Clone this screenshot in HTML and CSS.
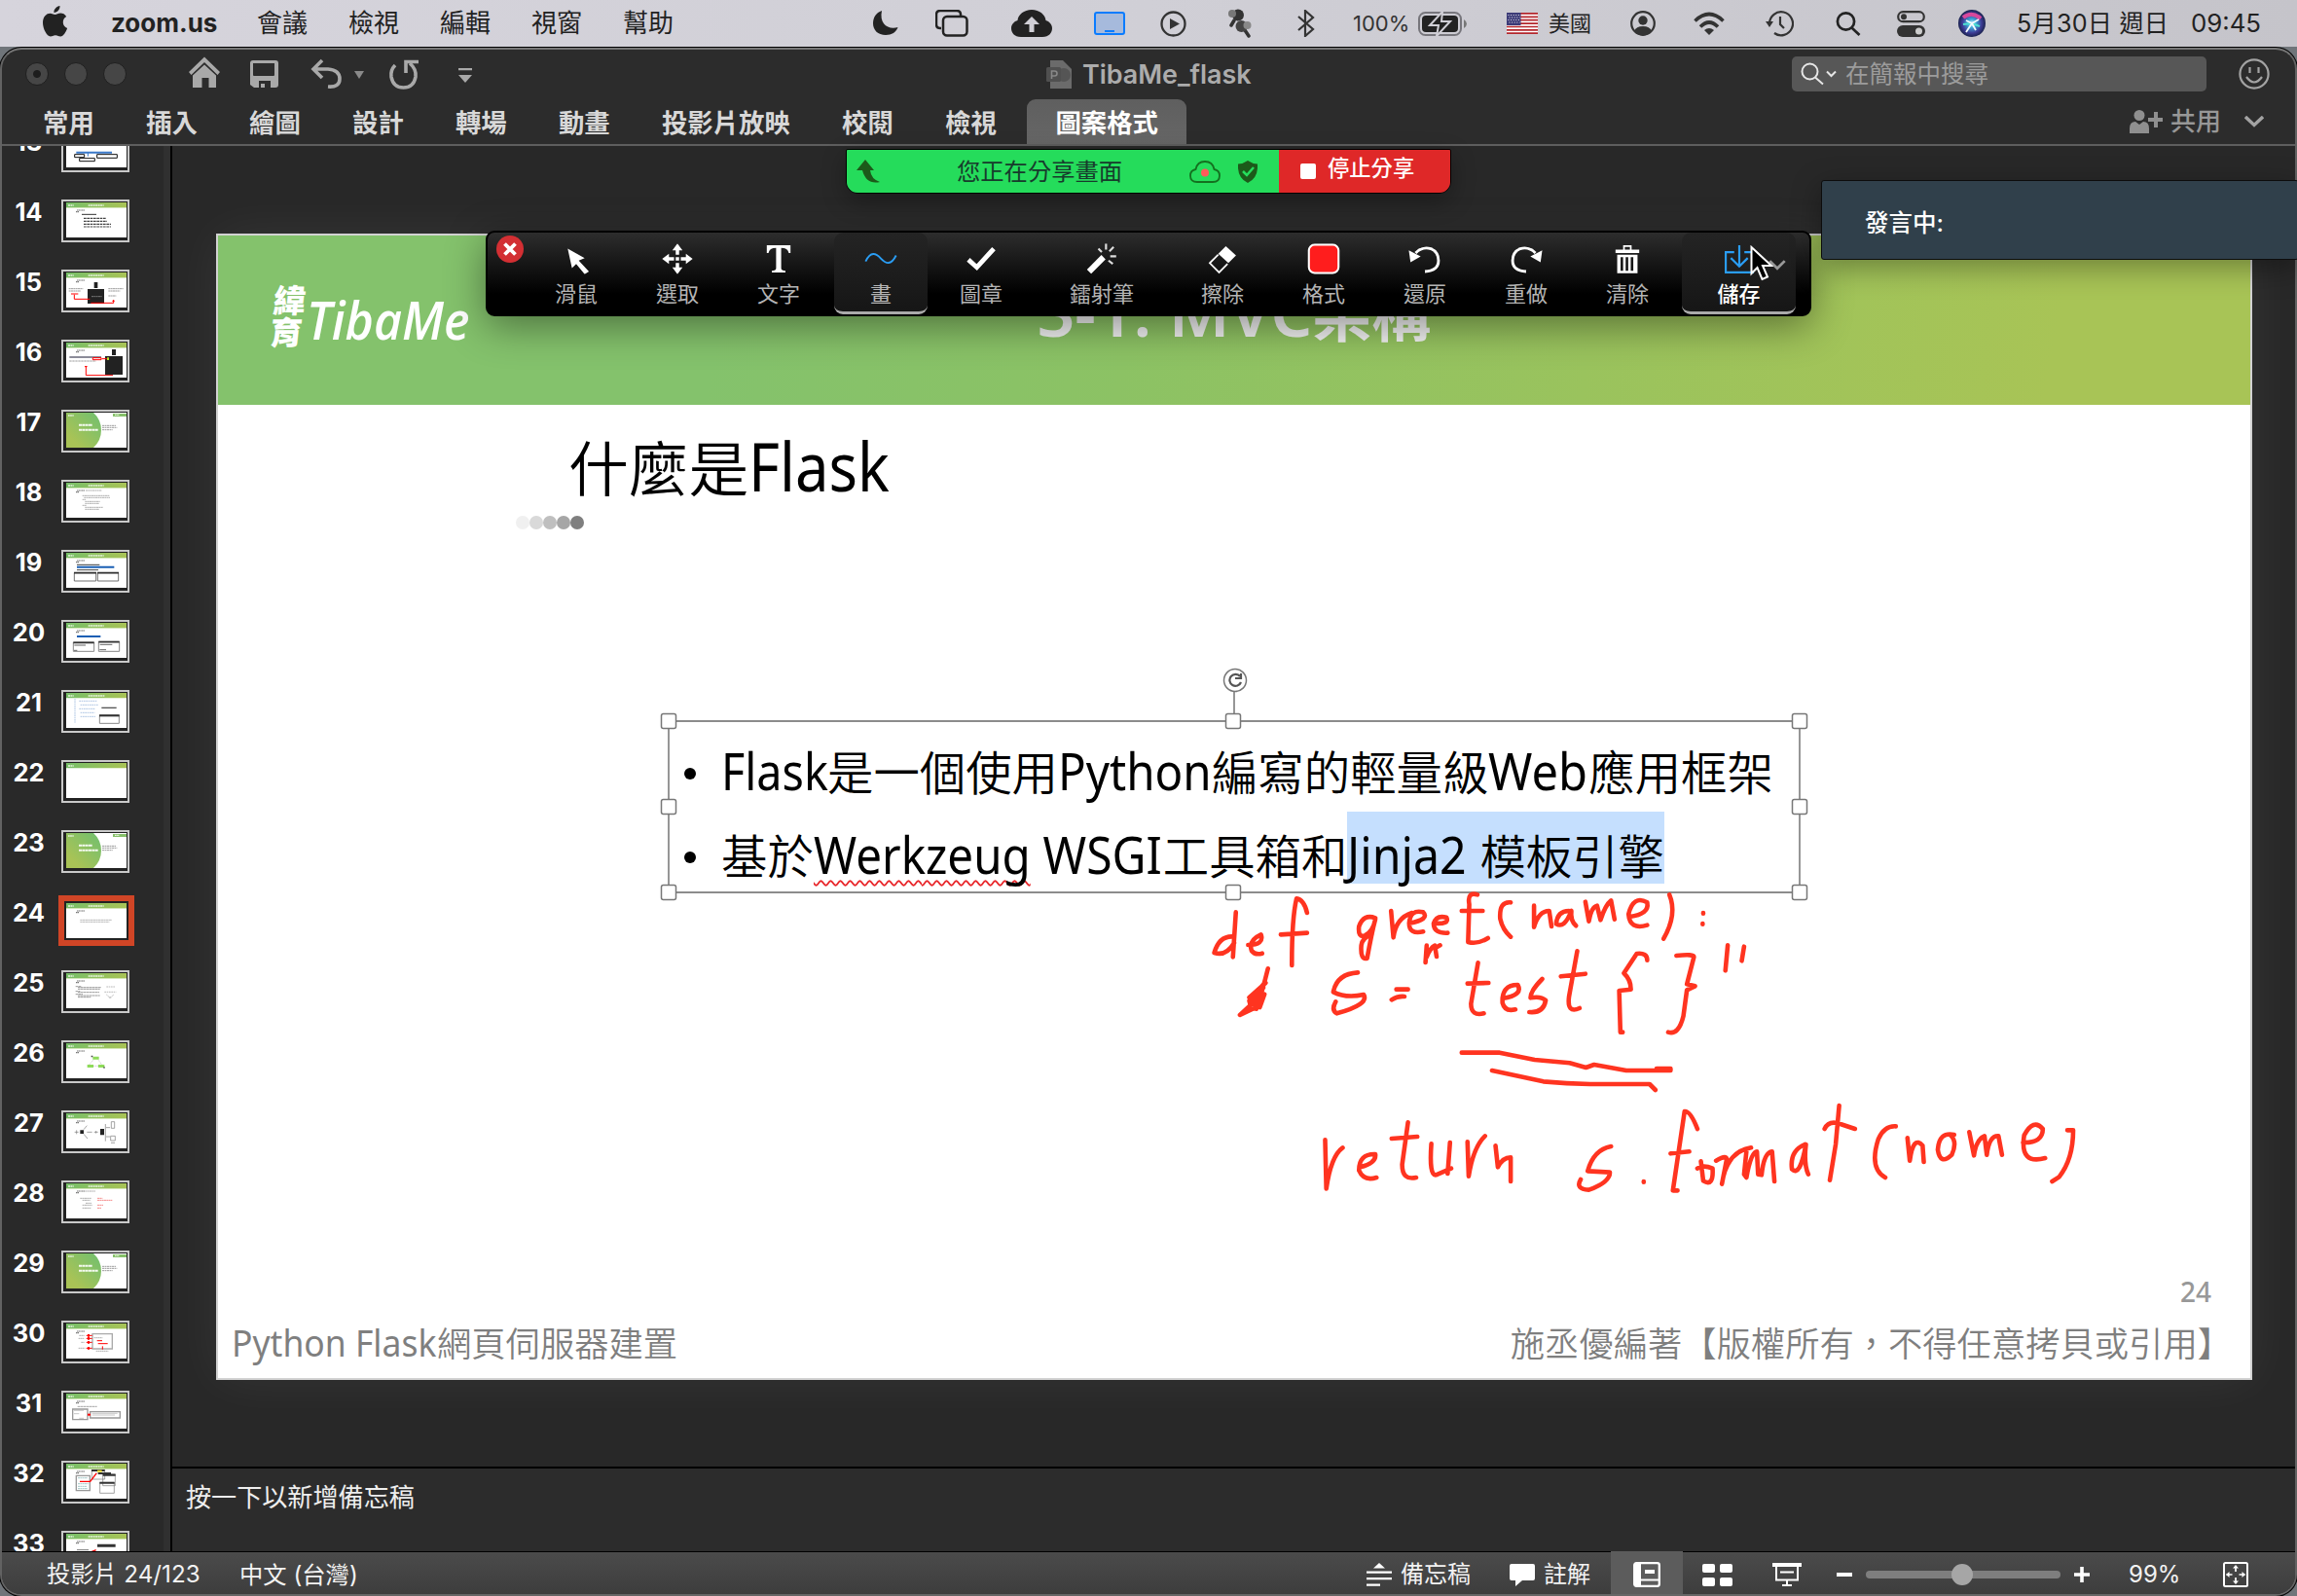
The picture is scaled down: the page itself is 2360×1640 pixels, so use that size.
FILE: index.html
```html
<!DOCTYPE html>
<html lang="zh-Hant">
<head>
<meta charset="utf-8">
<title>TibaMe_flask</title>
<link rel="stylesheet" href="styles.css">
</head>
<body>
<svg class="defs" width="0" height="0">
  <defs>
    <linearGradient id="g" x1="0" x2="1" y1="0" y2="0"><stop offset="0" stop-color="#76be68"/><stop offset="1" stop-color="#a9c356"/></linearGradient>
    <linearGradient id="gc" x1="1" x2="0" y1="0" y2="1"><stop offset="0" stop-color="#6fbf70"/><stop offset=".8" stop-color="#a9c356"/></linearGradient>
    <radialGradient id="siri"><stop offset="0" stop-color="#d8f4ff"/><stop offset=".3" stop-color="#3fa9d8"/><stop offset=".7" stop-color="#3d3c96"/><stop offset="1" stop-color="#1b2350"/></radialGradient>
    <symbol id="hd" viewBox="0 0 186 108"><path fill="#fff" d="M0 0h186v108H0z"/><path fill="url(#g)" d="M0 0h186v16H0z"/><path fill="#cfe3b0" d="M0 16h186v2H0z"/><path d="M6 9h17M68 9h48" stroke="#e9f4e0" stroke-width="5" stroke-dasharray="6 1.5"/><path d="M33 24h24M30 29h9" stroke="#777" stroke-width="3.500" stroke-dasharray="4 1"/></symbol>
    <symbol id="cv" viewBox="0 0 186 108"><path fill="#fff" d="M0 0h186v108H0z"/><path fill="url(#gc)" d="M0 0h84q24 22 24 54t-24 54H0z"/><path fill="#86c06a" d="M144 3h42v9h-42z"/><path d="M6 9h17M150 7h14" stroke="#e9f4e0" stroke-width="4" stroke-dasharray="5 1.5"/><path d="M39 38h42M39 53h60" stroke="#f4faf0" stroke-width="6" stroke-dasharray="9 1"/><path d="M111 40h42M111 46h46M111 53h32" stroke="#888" stroke-width="2.500" stroke-dasharray="6 1.5"/></symbol>
  </defs>
</svg>

<header class="menubar">
  <nav class="menus">
    <svg class="apple" viewBox="0 0 27 32"><path fill="#222" d="M18.5 0c.4 3.6-2.700 7-6 6.900C12 3.600 15.200.500 18.500 0zM13.500 9c1.700 0 3.200-1.400 5.800-1.400 2.200 0 4.500 1.200 5.900 3.300-5.100 3-4.200 10 .9 12.100-1.300 3.800-4 8.500-6.900 8.500-2 0-2.700-1.300-5.200-1.300-2.500 0-3.300 1.300-5.200 1.300C5.400 31.500 1 24 1 17.300 1 11 4.800 7.700 8.400 7.700c2.300 0 3.900 1.300 5.100 1.300z"/></svg>
    <b class="app">zoom.us</b><span>會議</span><span>檢視</span><span>編輯</span><span>視窗</span><span>幫助</span>
  </nav>
  <div class="tray">
    <i class="w64"><svg width="26" height="26" viewBox="0 0 26 26"><path fill="#222" d="M9 0C3 2 0 7 0 13c0 7 5 12 13 12 6 0 11-3 12.500-8C16 20 6 14 9 0z"/></svg></i>
    <i class="w78"><svg width="34" height="28" viewBox="0 0 34 28" fill="none" stroke="#222" stroke-width="2.500"><path d="M6 19H5q-4 0-4-4V5q0-4 4-4h17q4 0 4 4v1"/><rect x="8" y="7" width="24.500" height="19.500" rx="4"/></svg></i>
    <i class="w85"><svg width="42" height="28" viewBox="0 0 42 28"><path fill="#222" d="M10 28C3 28 0 23.500 0 19c0-4 3-7 6.500-8C7 5 13 0 21 0s14 5 14.500 11C39 12 42 15 42 19c0 4.500-3 9-10 9z"/><path fill="#d0cfd6" d="M21 7l8 8h-5.500v8h-5v-8H13z"/></svg></i>
    <i class="w68"><svg width="32" height="24" viewBox="0 0 32 24"><rect x="1" y="1" width="30" height="22" rx="2" fill="#a6badc" stroke="#0a7cff" stroke-width="2"/><path stroke="#0a7cff" stroke-width="2" d="M11 20h10"/></svg></i>
    <i class="w70"><svg width="27" height="27" viewBox="0 0 27 27"><circle cx="13.500" cy="13.500" r="12" fill="none" stroke="#333" stroke-width="2.300"/><path fill="#333" d="M10 8l10 5.500-10 5.500z"/></svg></i>
    <i class="w71"><svg width="24" height="30" viewBox="0 0 24 30"><circle cx="10" cy="6.500" r="6" fill="#333"/><circle cx="4" cy="5" r="4" fill="#777"/><path stroke="#333" stroke-width="3.500" stroke-linecap="round" d="M6 12l-3 5M17 22l4 6"/><circle cx="13.500" cy="18" r="6" fill="#444"/><circle cx="19.500" cy="17" r="4" fill="#888"/></svg></i>
    <i class="w57"><svg width="18" height="28" viewBox="0 0 18 28" fill="none" stroke="#333" stroke-width="2.200"><path d="M1 7l15 13-8 7V1l8 7L1 21"/></svg></i>
    <span class="pct">100%</span>
    <i class="w91"><svg width="51" height="25" viewBox="0 0 51 25"><rect x="1" y="1" width="43" height="23" rx="6.500" fill="none" stroke="#77767c" stroke-width="2"/><rect x="4" y="4" width="37" height="17" rx="4" fill="#222"/><path fill="#777" d="M47 8q3 2 3 4.500T47 17z"/><path fill="#222" stroke="#d0cfd6" stroke-width="2" d="M25 0L12 14h9l-2 11 14-15h-9z"/></svg></i>
    <i class="w43"><svg width="32" height="22" viewBox="0 0 32 22"><path fill="#fff" d="M0 0h32v22H0z"/><path stroke="#b3262c" stroke-width="1.700" d="M0 .9h32M0 4.300h32M0 7.700h32M0 11.100h32M0 14.500h32M0 17.900h32M0 21.200h32"/><path fill="#3c3b78" d="M0 0h14.500v13H0z"/><path stroke="#fff" stroke-width=".9" stroke-dasharray="1 1.600" d="M1.500 2.500h12M2.500 5h11M1.500 7.500h12M2.500 10h11"/></svg></i>
    <span class="inp">美國</span>
    <i class="w65"><svg width="26" height="26" viewBox="0 0 26 26"><circle cx="13" cy="13" r="11.800" fill="none" stroke="#333" stroke-width="2.200"/><circle cx="13" cy="10" r="4.700" fill="#333"/><path fill="#333" d="M4 21q2-5 9-5t9 5q-4 4.500-9 4.500T4 21z"/></svg></i>
    <i class="w74"><svg width="32" height="24" viewBox="0 0 32 24" fill="none" stroke="#333" stroke-width="3.600"><path d="M1.500 9.500q14.500-14 29 0"/><path d="M7 15.500q9-9 18 0"/><path fill="#333" stroke="none" d="M11 19q5-4 10 0l-5 5z"/></svg></i>
    <i class="w72"><svg width="29" height="27" viewBox="0 0 29 27" fill="none" stroke="#333" stroke-width="2.200"><path d="M4 13A12 12 0 1 1 9 23"/><path d="M15 6v8l4 4"/><path fill="#333" stroke="none" d="M0 11h8l-4 6z"/></svg></i>
    <i class="w63"><svg width="26" height="25" viewBox="0 0 26 25" fill="none" stroke="#222" stroke-width="2.700"><circle cx="10.500" cy="10" r="8.600"/><path d="M16.500 16.500l8 7.500"/></svg></i>
    <i class="w63"><svg width="29" height="27" viewBox="0 0 29 27"><rect x="1.200" y="1.200" width="26.600" height="10" rx="5" fill="none" stroke="#333" stroke-width="2.200"/><circle cx="7" cy="6.200" r="3" fill="#333"/><rect y="15" width="29" height="12" rx="6" fill="#333"/><circle cx="22.500" cy="21" r="3.500" fill="#ccc"/></svg></i>
    <i class="w61"><svg width="28" height="28" viewBox="0 0 28 28"><circle cx="14" cy="14" r="14" fill="url(#siri)"/><path fill="none" stroke="#d8489c" stroke-width="4" d="M5 8q9-7 18 1"/><path stroke="#4fe0d0" stroke-width="2" d="M14 14l8 3M14 14l-9 1"/><path stroke="#f3fbff" stroke-width="1.800" d="M14 14L8 23M14 14l7-4M14 14l4 7M14 14l-6-3"/></svg></i>
    <span class="date">5月30日 週日</span><span class="clock">09:45</span>
  </div>
</header>

<main class="window">
  <div class="titlebar">
    <div class="lights"><i class="dot"></i><i></i><i></i></div>
    <svg class="quick" width="310" height="36" viewBox="0 0 310 36" fill="#a9a9a9">
      <path d="M2 17L18 1.500 34 17l-2.500 3L18 7 4.500 20z"/><path d="M6 20.500L18 9.500l12 11V33h-7.500V23h-7v10H6z"/>
      <path fill-rule="evenodd" d="M68 5h23q3 0 3 3v22q0 3-3 3H69l-4-3V8q0-3 3-3zm0 3v12q0 1 1 1h20q1 0 1-1V8zm6 18v7h2v-4h4v4h6v-7z"/>
      <path fill="none" stroke="#a9a9a9" stroke-width="3.600" d="M139 5l-9 9 9 9M131 14h14q12 1 12 10t-12 8"/>
      <path fill="#8a8a8a" d="M172 16h10l-5 8z"/>
      <path fill="none" stroke="#a9a9a9" stroke-width="3.600" d="M214 10q-5 5-4 12 2 11 12.500 11T235 22q1-8-6-14M225 18V6.500h13"/>
      <path d="M279 13h14v2.300h-14zM279 20h14l-7 8z"/>
    </svg>
    <div class="doc"><svg width="26" height="29" viewBox="0 0 26 29"><path fill="#6b6b6b" d="M4 0h13l9 9v20H4z"/><circle cx="18" cy="15" r="7" fill="#555"/><rect y="7" width="15" height="15" rx="1.500" fill="#505050"/><path fill="none" stroke="#888" stroke-width="1.600" d="M5.500 19v-8h3q2.500 0 2.500 2.500T8.500 16h-3"/></svg><b>TibaMe_flask</b></div>
    <div class="search"><svg width="38" height="24" viewBox="0 0 38 24" fill="none" stroke="#e6e6e6" stroke-width="2"><circle cx="9.500" cy="9.500" r="8"/><path d="M15 15.500l8 7M27 9.500l4.500 4.500L36 9.500"/></svg><span>在簡報中搜尋</span></div>
    <svg class="smile" width="32" height="32" viewBox="0 0 32 32" fill="none" stroke="#a3a3a3" stroke-width="2.200"><circle cx="16" cy="16" r="14.600"/><path d="M11.500 9v6M20.500 9v6M8 19q8 11 16 0"/></svg>
  </div>
  <div class="ribbon">
    <nav><span>常用</span><span>插入</span><span>繪圖</span><span>設計</span><span>轉場</span><span>動畫</span><span>投影片放映</span><span>校閱</span><span>檢視</span><span class="on">圖案格式</span></nav>
    <div class="share"><svg width="34" height="26" viewBox="0 0 34 26" fill="#8f8f8f"><circle cx="10" cy="6.500" r="5.500"/><path d="M0 25v-5q0-7 6-7l4 3 4-3q6 0 6 7v5zM25 3h4v6h5v4h-5v6h-4v-6h-6V9h6z"/></svg><span>共用</span><svg width="20" height="12" viewBox="0 0 20 12" fill="none" stroke="#a3a3a3" stroke-width="3.400"><path d="M1 1l9 8.500L19 1"/></svg></div>
  </div>

  <div class="body">
    <aside class="rail"><div class="list">
      <div class="row"><b>13</b><div class="th"><svg viewBox="0 0 186 108"><use href="#hd"/><path stroke="#3a78c8" stroke-width="6" d="M31 62h110"/><path stroke="#3a78c8" stroke-width="3" d="M67 62v12"/><g fill="#fff" stroke="#111" stroke-width="3"><path d="M26 68h30v9H26zM41 80h47v9H41zM95 68h62v11H95z"/></g></svg></div></div>
      <div class="row"><b>14</b><div class="th"><svg viewBox="0 0 186 108"><use href="#hd"/><path stroke="#444" stroke-width="3.500" stroke-dasharray="8 2" d="M54 49h68M54 58h72M54 67h84M54 75h84"/><path stroke="#333" stroke-width="3" d="M48 37h45"/></svg></div></div>
      <div class="row"><b>15</b><div class="th"><svg viewBox="0 0 186 108"><use href="#hd"/><path fill="#222" d="M66 51h51v45H66zM86 30h11v18H86z"/><path stroke="#888" stroke-width="2.500" stroke-dasharray="6 1" d="M8 50h44M8 57h37M130 50h46M130 57h36M130 72h24M78 74h32"/><path fill="none" stroke="red" stroke-width="3" d="M15 66h22M25 68v14h48M76 94h70V84M142 88h7"/></svg></div></div>
      <div class="row"><b>16</b><div class="th"><svg viewBox="0 0 186 108"><use href="#hd"/><path fill="#222" d="M120 42h54v57h-54zM141 21h12v18h-12z"/><path stroke="#667" stroke-width="4" d="M10 45h98"/><path stroke="#888" stroke-width="2.500" stroke-dasharray="7 2" d="M10 57h82"/><path fill="none" stroke="red" stroke-width="3" d="M82 47h26v6H82zM110 50h16M61 72v29h83M57 74h8"/><path fill="#b8e02a" d="M126 46h6v8h-6z"/></svg></div></div>
      <div class="row"><b>17</b><div class="th"><svg viewBox="0 0 186 108"><use href="#cv"/></svg></div></div>
      <div class="row"><b>18</b><div class="th"><svg viewBox="0 0 186 108"><use href="#hd"/><path stroke="#888" stroke-width="2" stroke-dasharray="6 1" d="M60 24h50M50 40h84M55 46h80M50 52h10M58 58h46M58 64h44M50 70h12M58 76h56M58 82h44"/></svg></div></div>
      <div class="row"><b>19</b><div class="th"><svg viewBox="0 0 186 108"><use href="#hd"/><path stroke="#1a5fb4" stroke-width="6" d="M33 44h115"/><path stroke="#444" stroke-width="3" d="M33 37h70M33 53h66"/><g fill="#fff" stroke="#555" stroke-width="2.500"><path d="M25 62h67v25H25zM97 62h64v25H97z"/></g><path stroke="#333" stroke-width="5" d="M24 62h69M96 62h66"/></svg></div></div>
      <div class="row"><b>20</b><div class="th"><svg viewBox="0 0 186 108"><use href="#hd"/><path stroke="#1a5fb4" stroke-width="6" d="M33 42h73"/><g fill="#fff" stroke="#888" stroke-width="3"><path d="M22 60h64v28H22zM100 58h64v30h-64z"/></g><path stroke="#333" stroke-width="5" d="M22 61h64M100 59h64"/><path stroke="#666" stroke-width="3" d="M25 69h35M104 67h38M24 85h10M103 83h20"/></svg></div></div>
      <div class="row"><b>21</b><div class="th"><svg viewBox="0 0 186 108"><path fill="#fff" d="M0 0h186v108H0z"/><path fill="url(#g)" d="M0 0h186v16H0z"/><path d="M6 9h17M68 9h50" stroke="#e9f4e0" stroke-width="5" stroke-dasharray="6 1.500"/><path stroke="#9bb8dd" stroke-width="2.500" stroke-dasharray="5 2" d="M40 25h54M44 37h56M40 49h50M44 61h44M44 73h46M27 18v74"/><path stroke="#555" stroke-width="4" d="M109 46h46"/><path fill="#fff" stroke="#888" stroke-width="3" d="M103 68h60v26h-60z"/><path stroke="#333" stroke-width="6" d="M102 70h62"/></svg></div></div>
      <div class="row"><b>22</b><div class="th"><svg viewBox="0 0 186 108"><path fill="#fff" d="M0 0h186v108H0z"/><path fill="url(#g)" d="M0 0h186v16H0z"/><path d="M6 9h17" stroke="#e9f4e0" stroke-width="5" stroke-dasharray="6 1.500"/></svg></div></div>
      <div class="row"><b>23</b><div class="th"><svg viewBox="0 0 186 108"><use href="#cv"/></svg></div></div>
      <div class="row sel"><b>24</b><div class="th"><svg viewBox="0 0 186 108"><use href="#hd"/><path stroke="#999" stroke-width="2" stroke-dasharray="7 1" d="M43 52h98M43 58h90"/></svg></div></div>
      <div class="row"><b>25</b><div class="th"><svg viewBox="0 0 186 108"><use href="#hd"/><path stroke="#777" stroke-width="2.200" stroke-dasharray="8 1" d="M29 41h18M36 44h72M36 49h68M29 56h14M36 59h66M29 65h22M36 69h68M36 74h40"/><path fill="none" stroke="#999" stroke-width="2" stroke-dasharray="5 2" d="M124 42h26M118 58h36M124 66l11 10 12-10M132 75h8"/></svg></div></div>
      <div class="row"><b>26</b><div class="th"><svg viewBox="0 0 186 108"><use href="#hd"/><path stroke="#bbb" stroke-width="2" stroke-dasharray="4 2" d="M85 50L71 66M98 50l12 16M84 70h20"/><path fill="#8edb5a" d="M82 41h19v9H82zM65 66h19v9H65zM99 66h19v9H99z"/><path fill="#444" d="M77 38h5v5h-5zM115 73h4v4h-4z"/></svg></div></div>
      <div class="row"><b>27</b><div class="th"><svg viewBox="0 0 186 108"><use href="#hd"/><path fill="#222" d="M43 52h11v11H43zM105 48h12v19h-12z"/><path fill="none" stroke="#777" stroke-width="2" d="M26 58h12M32 52v12M54 50l10-12M54 64l12 14M64 58h16M86 58h12M92 54v8M121 33v53M123 44h12M123 72h12M139 26h10v20h-10zM137 70h14v14h-14zM138 91h12"/></svg></div></div>
      <div class="row"><b>28</b><div class="th"><svg viewBox="0 0 186 108"><use href="#hd"/><path stroke="#888" stroke-width="2" stroke-dasharray="6 1" d="M58 24h32M43 46h34M50 52h24M60 61h18M50 67h30M50 76h26"/><path stroke="#f05050" stroke-width="2" stroke-dasharray="6 1" d="M96 46h16M96 52h46M96 67h18M96 76h12"/></svg></div></div>
      <div class="row"><b>29</b><div class="th"><svg viewBox="0 0 186 108"><use href="#cv"/></svg></div></div>
      <div class="row"><b>30</b><div class="th"><svg viewBox="0 0 186 108"><use href="#hd"/><path fill="#fff" stroke="#aaa" stroke-width="4" d="M81 32h61v46H81z"/><path stroke="#888" stroke-width="2" stroke-dasharray="5 1" d="M40 37h16M38 46h18M46 58h10M38 76h20M86 44h26M92 85h38"/><path stroke="red" stroke-width="3" d="M62 37h18M62 46h18M62 58h18M62 76h18M95 53h16M98 62h30M112 70v10"/><path fill="red" d="M66 33h6v8h-6zM66 42h6v8h-6zM66 54h6v8h-6zM66 72h6v8h-6z"/></svg></div></div>
      <div class="row"><b>31</b><div class="th"><svg viewBox="0 0 186 108"><use href="#hd"/><path stroke="#777" stroke-width="2" stroke-dasharray="8 1" d="M35 40h60"/><g fill="#fff" stroke="#999" stroke-width="4"><path d="M20 48h46v32H20zM74 56h92v19H74z"/></g><path stroke="#aaa" stroke-width="2" d="M24 52h30M24 62h16M80 61h78M80 66h70M40 76h14"/><path fill="red" d="M66 62h9v6h-9z"/></svg></div></div>
      <div class="row"><b>32</b><div class="th"><svg viewBox="0 0 186 108"><use href="#hd"/><g fill="#fff" stroke="#777" stroke-width="2"><path d="M79 20h40v28H79zM113 32h38v36h-38zM104 58h44v33h-44z"/></g><path stroke="#333" stroke-width="6" d="M78 21h41M98 30h40M113 35h39M103 59h46"/><path fill="#fff" stroke="#999" stroke-width="4" d="M31 37h42v46H31z"/><path stroke="#7aa" stroke-width="2" stroke-dasharray="6 1" d="M36 44h30M36 62h32M36 70h28M36 77h30"/><path fill="none" stroke="red" stroke-width="4" d="M42 55h32l20-26"/><path fill="#e8d820" d="M96 20h14v6H96z"/></svg></div></div>
      <div class="row"><b>33</b><div class="th"><svg viewBox="0 0 186 108"><use href="#hd"/><path fill="#333" d="M96 32h56v9H96zM104 56h58v8h-58z"/><path stroke="red" stroke-width="4" d="M68 60l24-10M46 56v10M20 62h40"/><path stroke="#777" stroke-width="3" d="M33 50h36"/></svg></div></div>
    </div></aside>

    <section class="work">
      <div class="stage">
        <article class="slide">
          <div class="band">
            <div class="logo"><span class="zh">緯<br>育</span><span class="en">TibaMe</span></div>
            <h1><span>3-1. MVC</span>架構</h1>
          </div>
          <h2>什麼是<span>Flask</span></h2>
          <div class="dots"><i></i><i></i><i></i><i></i><i></i></div>
          <div class="box">
            <p><em class="e1">Flask</em>是一個使用<em class="e2">Python</em>編寫的輕量級<em class="e3">Web</em>應用框架</p>
            <p>基於<em class="e4">Werkzeug</em><em class="e5"> WSGI</em>工具箱和<mark><em class="e6">Jinja2 </em>模板引擎</mark></p>
            <svg class="frame" width="1182" height="250" viewBox="0 0 1182 250">
              <g fill="none" stroke="#8c8c8c" stroke-width="1.800"><path d="M10 63h1162v176H10zM591 30v30"/></g>
              <g fill="#fff" stroke="#777" stroke-width="1.500"><circle cx="592" cy="21" r="11.500"/>
              <rect x="2.500" y="55.500" width="15" height="15" rx="2"/><rect x="582.500" y="55.500" width="15" height="15" rx="2"/><rect x="1164.500" y="55.500" width="15" height="15" rx="2"/>
              <rect x="2.500" y="143.500" width="15" height="15" rx="2"/><rect x="1164.500" y="143.500" width="15" height="15" rx="2"/>
              <rect x="2.500" y="231.500" width="15" height="15" rx="2"/><rect x="582.500" y="231.500" width="15" height="15" rx="2"/><rect x="1164.500" y="231.500" width="15" height="15" rx="2"/></g>
              <path fill="none" stroke="#555" stroke-width="2.200" d="M597 17a6 6 0 1 0 1 6M598 14v5h-6"/>
            </svg>
          </div>
          <div class="num">24</div>
          <footer><span class="fl"><em>Python Flask</em>網頁伺服器建置</span><span>施丞優編著【版權所有，不得任意拷貝或引用】</span></footer>
          <svg class="ink" width="940" height="340" viewBox="0 0 1568 1020" preserveAspectRatio="none">
            <path d="M83 112L78 250M76 187q-22 0-30 50q20 12 34-30M104 213q28 0 22-32q-22 18-16 50q6 14 18 8M205 114q-5-40-18-44q-8 60-8 200v6M160 181l45-5"/>
            <path d="M322 130q-20-14-28 26q-2 36 10 28q14-12 18-50q-6 40-14 120q-12 6-10-40q2-24 18-34M349 108l4 82q4-60 32-76M380 146q36-12 24-34q-22-10-24 34q0 36 24 26M422 146q28 4 22-18q-18-8-22 20q0 30 24 28M497 58q-18-10-14 30l-2 116q16 8 34-12M470 108h36M554 82q-20-4-18 50q4 34 18 56"/>
            <path d="M594 92v66q8-50 26-50l4 48M654 108q-20 0-22 40q14 16 26-40q-2 30 8 46M682 80l6 60q4-44 14-48l6 44q8-46 18-60l6 58M758 126q34-8 30-44q-24-24-32 36q2 50 32 34M826 58q14 60-10 136M884 114v2M883 147v2"/>
            <path d="M410 215l-2 52M410 250q6-28 14-35l3 34M425 222l8-8M138 286q-8 60-20 124M134 330l-28 45q10 20 20-20l6-24-26 54 2 14-18 30 28-24M130 345l-22 36 16 24 8-40-20 30"/>
            <path d="M292 298q-36 4-42 60q22 20 52 8q10 30-46 58q-10-10-2-36M358 350h20M350 382q10-12 22-10M498 268l-12 126q0 40 22 30M480 332l36-2M540 378q36-10 26-42q-28 0-26 56q4 28 22 20M608 318q-20 36-20 58q18-6 26 8q-4 40-28 36M668 232l-14 140q-4 54 18 36M640 310l42-8"/>
            <path d="M788 260q0-24-18-20l-22 60q12 20 12 50l-20 4 2 128h4M838 246q30-6 30 4l-12 84 14 6-14 12-6 80q-8 60-26 50M926 214l-4 78M954 218l-4 44"/>
            <path d="M470 545h65l60 22 60 10 28 14 14-9 55 18h76v-6h-24M522 600l88 34q40 6 80 8h102l10 18"/>
            <path d="M236 814l2 150q8-100 28-126M296 898q28-12 26-40q-28-2-28 50q8 34 30 22M378 760l-10 130q0 50 24 40M350 810l44-6M418 826q-4 100 8 96l26-20M450 822l-4 96M480 820l2 106q8-90 28-124M528 832l4 66q8-30 22-30v74"/>
            <path d="M726 834q-30 10-40 76l38 4q0 30-36 54q-24-2-14-32M782 942v2M874 780q-12-56-22-54q-10 120-20 244h8M828 856l32-6M880 880l4 60q18 20 16-38q-16-12-26 0M906 878q20-20 18-2l-8 74q8-100 50-112M958 850l-4 70 4 10q8-80 18-80l2 70 6 2q4-70 18-72l4 92M1058 828q-26 20-22 76q14 26 24-76q-4 60 4 92M1117 708l-6 120-10 110M1092 780q6-24 22-18l30 18"/>
            <path d="M1214 772q-20-2-30 40q-16 90 12 118M1234 808l4 70q6-80 22-46l2 50M1314 798q-26-10-28 46q4 50 24 16q10-40-2-60M1340 790l8 72q4-50 18-60l4 58q4-60 20-58l6 58M1432 822q34 2 34-42q-16-34-32 20q-8 92 36 70M1508 784h10q0 90-24 144l-12 14"/>
          </svg>
        </article>
      </div>
      <div class="notes">按一下以新增備忘稿</div>
    </section>
  </div>

  <div class="status">
    <span class="s1">投影片 24/123</span><span class="s2">中文 (台灣)</span>
    <div class="tools">
      <svg width="26" height="26" viewBox="0 0 26 26" fill="#fff"><path d="M7 6.500L13 1l6 5.500zM0 9.500h26v2.200H0zM0 16h26v2.200H0zM0 22.500h14v2.200H0z"/></svg><span class="a">備忘稿</span>
      <svg width="26" height="26" viewBox="0 0 26 26" fill="#fff"><path d="M2 2h22q2 0 2 2v13q0 2-2 2H13l-7 6v-6H2q-2 0-2-2V4q0-2 2-2z"/></svg><span class="b">註解</span>
      <i class="act"><svg width="28" height="26" viewBox="0 0 28 26"><rect x="1.200" y="1.200" width="25.600" height="23.600" rx="2" fill="none" stroke="#fff" stroke-width="2.300"/><path fill="#fff" d="M2 1h6v24H2zM12 8h10v4H12zM8 17.500h18v2H8z"/></svg></i>
      <svg class="gr" width="31" height="23" viewBox="0 0 31 23" fill="#fff"><rect width="13" height="9" rx="2"/><rect x="18" width="13" height="9" rx="2"/><rect y="14" width="13" height="9" rx="2"/><rect x="18" y="14" width="13" height="9" rx="2"/></svg>
      <svg class="pr" width="30" height="24" viewBox="0 0 30 24" fill="#fff"><path d="M0 0h30v4H0zM8 8.500h14v2H8zM10 22h10v2H10zM14 17h2v6h-2z"/><path fill="none" stroke="#fff" stroke-width="2" d="M4 3v14.500h22V3"/></svg>
      <i class="minus"></i><i class="slider"><i></i></i>
      <svg class="plus" width="16" height="16" viewBox="0 0 16 16"><path stroke="#fff" stroke-width="3.600" d="M8 0v16M0 8h16"/></svg>
      <span class="z">99%</span>
      <svg width="26" height="26" viewBox="0 0 26 26" fill="none" stroke="#fff" stroke-width="2"><rect x="1" y="1" width="24" height="24" rx="1.500"/><path stroke-width="1.700" d="M13 4v6M13 16v6M3.500 13h6M16.500 13h6"/><path fill="#fff" stroke="none" d="M10 6.500l3-3.500 3 3.500zM10 19.500l3 3.500 3-3.500zM6.500 10L3 13l3.500 3zM19.500 10l3.500 3-3.500 3z"/></svg>
    </div>
  </div>
</main>

<div class="sharing">
  <div class="go">
    <svg width="24" height="24" viewBox="0 0 24 24"><path fill="#1c5a1a" d="M9 0l9 11h-4q1 9 10 12-14 3-18-12H0z"/></svg>
    <span>您正在分享畫面</span>
    <svg width="32" height="23" viewBox="0 0 32 23"><path fill="none" stroke="#14701f" stroke-width="1.800" d="M8 22q-7 0-7-6.500Q1 10 6.500 9 8 1 16 1t9.500 8Q31 10 31 15.500 31 22 24 22z"/><circle cx="16" cy="12.500" r="4" fill="#ff5a5a"/></svg>
    <svg class="shield" width="20" height="23" viewBox="0 0 20 23"><path fill="#1c5a1a" d="M10 0q5 3.500 10 3.500Q21 18 10 23-1 18 0 3.500 5 3.500 10 0z"/><path fill="none" stroke="#25dc5b" stroke-width="2.500" d="M5 11l4 4 7-8"/></svg>
  </div>
  <div class="stop"><i></i><span>停止分享</span></div>
</div>

<div class="anno">
  <div class="close"><svg width="14" height="14" viewBox="0 0 14 14"><path stroke="#fff" stroke-width="3.800" d="M1.500 1.500l11 11M12.500 1.500l-11 11"/></svg></div>
  <div class="tool"><svg viewBox="0 0 40 36"><path fill="#fff" d="M10 6l20 11-7 3 12 13-5 3-10-12-5 5z"/></svg>滑鼠</div>
  <div class="tool"><svg viewBox="0 0 40 36" fill="#fff"><path d="M20 0l6 8h-4v5h-4V8h-4zM20 36l6-8h-4v-5h-4v5h-4zM2 18l8-6v4h6v4h-6v4zM38 18l-8-6v4h-6v4h6v4z"/><path d="M18 16h4v4h-4z"/></svg>選取</div>
  <div class="tool"><svg viewBox="0 0 40 36"><path fill="#fff" d="M6 2h28v9h-2q-1-6-9-6v24q0 3 5 3v2H12v-2q5 0 5-3V5q-8 0-9 6H6z"/></svg>文字</div>
  <div class="tool pick"><svg viewBox="0 0 40 36"><path fill="none" stroke="#2a9df4" stroke-width="2.200" d="M2 21C8 9 14 11 20 17.500S32 26 38 14"/></svg>畫</div>
  <div class="tool"><svg viewBox="0 0 40 36"><path fill="none" stroke="#fff" stroke-width="5.500" d="M5 19l10 9L35 6"/></svg>圖章</div>
  <div class="tool wide"><svg viewBox="0 0 40 36"><path stroke="#fff" stroke-width="7" d="M5 33L22 16"/><path stroke="#ddd" stroke-width="2.500" d="M16 6l4 4M25 0v7M34 4l-5 5M30 15h7M28 20l5 4"/></svg>鐳射筆</div>
  <div class="tool"><svg viewBox="0 0 40 36"><path fill="#fff" d="M24 3l12 11-9 9-12-11z"/><path fill="none" stroke="#fff" stroke-width="2" d="M15 13L5 23l11 11 10-10"/></svg>擦除</div>
  <div class="tool"><svg viewBox="0 0 40 36"><rect x="2.500" y="1.200" width="35" height="33.600" rx="7" fill="#ff1d1d" stroke="#fff" stroke-width="2.400"/></svg>格式</div>
  <div class="tool"><svg viewBox="0 0 40 36"><path fill="none" stroke="#fff" stroke-width="3.300" d="M9 11q8-8 18-5 9 4 9 14 0 12-16 13"/><path fill="#fff" d="M1 8l2 14 12-7z"/></svg>還原</div>
  <div class="tool"><svg viewBox="0 0 40 36"><path fill="none" stroke="#fff" stroke-width="3.300" d="M31 11q-8-8-18-5-9 4-9 14 0 12 16 13"/><path fill="#fff" d="M39 8l-2 14-12-7z"/></svg>重做</div>
  <div class="tool"><svg viewBox="0 0 40 36"><path fill="#fff" fill-rule="evenodd" d="M6 7h9V2h10v5h9v4H6zm11-3v3h6V4zM8 13h24v22H8zm4 3v16h3V16zm6 0v16h3V16zm6 0v16h3V16z"/></svg>清除</div>
  <div class="tool pick save"><svg viewBox="0 0 40 36" fill="none" stroke="#2a9df4" stroke-width="2.500"><path d="M14 10H4v24h32V10H26M20 2v25M10 17l10 10 10-10"/></svg>儲存<svg class="car" viewBox="0 0 16 10"><path fill="none" stroke="#999" stroke-width="2.500" d="M1 1l7 7 7-7"/></svg></div>
</div>
<div class="speaking">發言中:</div>
<svg class="cursor" width="24" height="38" viewBox="0 0 24 38"><path fill="#000" stroke="#fff" stroke-width="2" d="M1.500 2v27l6-6 5 12 5.500-2.500-5-11.500H22z"/></svg>
</body>
</html>
```
FILE: styles.css
```css
* { box-sizing: border-box; }
body { margin: 0; width: 2360px; height: 1640px; overflow: hidden; position: relative; background: #70757a; font-family: Inter, "Noto Sans CJK TC", sans-serif; color: #fff; }
i, em { font-style: normal; }
svg { flex: none; display: block; }
.defs { position: absolute; }

.menubar { height: 48px; display: flex; justify-content: space-between; background: linear-gradient(90deg, #d6d4dc, #d0cfd6 50%, #c5c4ca); color: #222; font-size: 26px; line-height: 48px; }
.menus { display: flex; align-items: center; padding-left: 43px; }
.menus span { width: 94px; white-space: nowrap; }
.apple { width: 27px; height: 32px; margin-top: -4px; }
.app { width: 150px; margin-left: 44px; font-size: 26px; font-weight: 700; }
.tray { width: 1463px; display: flex; align-items: center; white-space: nowrap; }
.tray i { flex: none; }
.w43 { width: 43px } .w57 { width: 57px } .w61 { width: 61px } .w63 { width: 63px } .w64 { width: 64px } .w65 { width: 65px } .w68 { width: 68px } .w70 { width: 70px } .w71 { width: 71px } .w72 { width: 72px } .w74 { width: 74px } .w78 { width: 78px } .w85 { width: 85px } .w91 { width: 91px }
.pct { width: 67px; flex: none; font-size: 22px; color: #333; }
.inp { width: 84px; flex: none; font-size: 22px; }
.date { width: 178px; flex: none; font-size: 25.2px; letter-spacing: .2px; margin: -1px 0 0 -1px; }
.clock { font-size: 25.8px; margin: -1px 0 0 1px; }

.window { margin-top: 1px; height: 1591px; display: flex; flex-direction: column; background: #2c2c2c; border: 2px solid #626262; border-top-color: #777; border-bottom-color: #666; border-radius: 22px; overflow: hidden; box-shadow: 0 0 0 1px #000; }
.titlebar { height: 50px; display: flex; align-items: center; padding-left: 24px; }
.lights { display: flex; gap: 16px; width: 166px; }
.lights i { width: 24px; height: 24px; border-radius: 50%; background: #464646; border: 1px solid #202020; }
.lights .dot { background: radial-gradient(circle, #1d1d1d 3.5px, #464646 4.5px); }
.quick { margin-top: -2px; }
.doc { display: flex; align-items: center; gap: 11px; margin-left: 573px; width: 766px; color: #acacac; }
.doc b { font-weight: 600; font-size: 26.9px; }
.search { width: 426px; height: 36px; background: #575757; border-radius: 5px; display: flex; align-items: center; gap: 8px; padding-left: 9px; font-size: 24.5px; color: #9c9c9c; line-height: 38px; }
.smile { margin-left: 33px; }
.ribbon { height: 49px; flex: none; display: flex; justify-content: space-between; align-items: flex-end; border-bottom: 2px solid #5e5e5e; }
.ribbon nav { display: flex; padding-left: 15.5px; font-size: 26.4px; font-weight: 700; line-height: 48px; color: #d8d8d8; }
.ribbon nav span { padding: 0 26.6px; height: 46px; }
.ribbon nav .on { background: linear-gradient(#5f5f5f, #666); border-radius: 9px 9px 0 0; padding: 0 29px; margin-left: 5px; color: #fff; }
.share { display: flex; align-items: center; height: 46px; padding-right: 32px; color: #979797; font-size: 26px; font-weight: 500; }
.share span { margin: 0 24px 0 8px; line-height: 46px; }

.body { flex: 1; min-height: 0; display: flex; }
.rail { width: 175px; height: 1444px; overflow: hidden; background: linear-gradient(90deg, #292929 166px, #303030 166px, #303030 173px, #000 173px); }
.list { margin-top: -17px; }
.row { height: 72px; display: flex; align-items: flex-start; }
.row b { width: 55px; text-align: center; font-size: 25.5px; line-height: 30px; font-weight: 700; margin-top: -2px; }
.th { width: 70px; height: 44px; margin-left: 6px; border: 2px solid #c9c9c9; padding: 1px 1px 3px 3px; background: #222; }
.th svg { width: 62px; height: 36px; }
.sel .th { width: 78px; height: 52px; margin: -5px 0 0 3px; border: 6px solid #d04526; padding: 2px; }
.work { flex: 1; display: flex; flex-direction: column; min-width: 0; }
.stage { height: 1357px; flex: none; padding: 90px 0 0 45px; background: #282828; }
.notes { height: 87px; border-top: 2px solid #000; padding: 12px 0 0 14px; font-size: 26.1px; line-height: 36px; color: #eee; }

.slide { position: relative; width: 2092px; height: 1178px; background: #fff; border: 2px solid #d2d2d2; color: #000; font-family: "Noto Sans", "Noto Sans CJK TC", sans-serif; box-shadow: 0 0 50px rgba(255,255,255,.06); }
.band { height: 174px; background: linear-gradient(100deg, #84c26c 25%, #8cc264 45%, #a8c456 90%); position: relative; color: #fff; }
.logo { display: flex; padding: 50px 0 0 55px; }
.logo .zh { width: 34px; font-size: 33px; line-height: 33px; font-weight: 900; transform: skewX(-6deg); }
.logo .en { margin-left: 2px; font: italic 600 55px/72px "Open Sans", sans-serif; transform: scaleX(.91); transform-origin: 0 50%; }
h1 { position: absolute; left: 0; right: 0; top: 41px; height: 80px; margin: 0; text-align: center; font-size: 61px; line-height: 80px; font-weight: 600; color: #f2f2f2; }
h1 span { font-size: 67.5px; line-height: 56px; }
h2 { margin: 25px 0 0 360px; height: 80px; font-size: 61.8px; line-height: 80px; font-weight: 350; white-space: nowrap; }
h2 span { display: inline-block; font-weight: 400; font-size: 69px; line-height: 56px; transform: scaleX(.893); transform-origin: 0 50%; }
.dots { display: flex; margin: 9px 0 0 306px; height: 14px; }
.dots i { width: 14px; height: 14px; border-radius: 50%; background: #f0f0f0; }
.dots i:nth-child(2) { background: #d9d9d9; } .dots i:nth-child(3) { background: #bfbfbf; } .dots i:nth-child(4) { background: #a6a6a6; } .dots i:nth-child(5) { background: #7f7f7f; }
.box { position: relative; width: 1182px; height: 250px; margin: 134px 0 0 453px; padding: 73px 0 0 64px; }
.box p { margin: 0; height: 86px; line-height: 86px; font-size: 47.4px; font-weight: 350; white-space: nowrap; display: flex; align-items: baseline; position: relative; }
.box p::before { content: ""; position: absolute; left: -38px; top: 38px; width: 12px; height: 12px; border-radius: 50%; background: #000; }
.box em { flex: none; font-weight: 400; font-size: 52.5px; line-height: 82px; white-space: pre; transform-origin: 0 50%; }
.box .e1 { width: 109px; transform: scaleX(.89) }
.box .e2 { width: 158px; transform: scaleX(.905) }
.box .e3 { width: 103px; transform: scaleX(.93) }
.box .e4 { width: 223px; transform: scaleX(.905); text-decoration: underline wavy #e8262a 1.5px; text-underline-offset: 6px; text-decoration-skip-ink: none; }
.box .e5 { width: 136px; transform: scaleX(.915) }
.box .e6 { width: 136px; line-height: 88px; transform: scaleX(.92) }
mark { display: flex; align-items: baseline; height: 74px; margin-top: -3px; line-height: 92px; background: #c5dffe; color: #000; }
.frame { position: absolute; left: 0; top: 0; }
.num { margin: 381px 40px 0 0; text-align: right; font-size: 28px; line-height: 36px; font-weight: 500; color: #989898; }
footer { display: flex; justify-content: space-between; margin: 10px 19px 0 14px; font-size: 35.3px; line-height: 50px; color: #7f7f7f; font-weight: 350; }
.fl { display: flex; align-items: baseline; }
footer em { font-weight: 400; font-size: 39px; width: 211px; white-space: nowrap; line-height: 47px; transform: scaleX(.91); transform-origin: 0 50%; }
.ink { position: absolute; left: 996px; top: 658px; fill: none; stroke: #ff3420; stroke-width: 4.6; stroke-linecap: round; stroke-linejoin: round; }
.ink path { vector-effect: non-scaling-stroke; }

.status { height: 44px; flex: none; display: flex; align-items: center; background: linear-gradient(#4b4b4b, #3d3d3d); border-top: 1px solid #000; font-size: 24px; line-height: 46px; color: #f2f2f2; white-space: nowrap; }
.s1 { margin-left: 46px; width: 198px; padding-top: 3px; font-size: 24.2px; }
.s2 { padding-top: 3px; font-size: 24.3px; }
.tools { margin-left: auto; display: flex; align-items: center; width: 954px; height: 44px; padding-top: 3px; }
.tools .a { width: 112px; margin-left: 9px; padding-right: 1px; } .tools .b { width: 69px; margin-left: 9px; }
.act { width: 74px; height: 46px; margin-top: -3px; padding-top: 3px; background: #5c5c5c; display: flex; align-items: center; justify-content: center; }
.gr { margin-left: 20px; } .pr { margin-left: 41px; }
.minus { width: 16px; height: 4px; background: #fff; margin-left: 36px; }
.slider { width: 200px; height: 8px; border-radius: 4px; background: #7e7e7e; margin: 0 14px; position: relative; }
.slider i { position: absolute; left: 88px; top: -7px; width: 22px; height: 22px; border-radius: 50%; background: #a6a6a6; }
.tools .z { width: 97px; margin-left: 40px; }

.sharing { position: absolute; left: 869px; top: 153px; width: 622px; height: 46px; display: flex; border: 1px solid #000; border-radius: 2px 2px 12px 12px; overflow: hidden; box-shadow: 0 8px 24px rgba(0,0,0,.3); font-size: 24.3px; line-height: 42px; }
.go { width: 444px; background: #25dc5b; color: #173b2c; display: flex; align-items: center; padding-left: 10px; }
.go span { margin: -1px 69px 0 79px; }
.shield { margin-left: 18px; }
.stop { flex: 1; background: #df2828; display: flex; align-items: center; padding-left: 22px; font-size: 22.3px; font-weight: 500; line-height: 36px; }
.stop i { width: 16px; height: 16px; background: #fff; border-radius: 2px; margin-right: 12px; }
.stop span { margin-top: -6px; }

.anno { position: absolute; left: 499px; top: 237px; width: 1362px; height: 88px; padding-left: 1px; display: flex; background: linear-gradient(#2d2d2d, #000 75%); border: 2px solid #000; border-radius: 9px; box-shadow: 0 10px 40px rgba(0,0,0,.42); font-size: 22px; line-height: 32px; color: #b4b4b4; }
.close { width: 28px; height: 28px; margin: 3px 2px 0 8px; border-radius: 50%; background: #d32f33; display: flex; align-items: center; justify-content: center; }
.tool { width: 104px; height: 84px; display: flex; flex-direction: column; align-items: center; padding-top: 9px; position: relative; }
.tool > svg { width: 40px; height: 36px; transform: scale(.87); margin-bottom: 1.5px; }
.wide { width: 144px; }
.pick { width: 96px; margin: 0 3px 0 5px; background: linear-gradient(#242424, #161616); border-bottom: 3px solid #aaa; border-radius: 9px; }
.save { width: 117px; margin: 0 0 0 4px; color: #fff; font-weight: 500; }
.tool > .car { position: absolute; right: 10px; top: 28px; width: 18px; height: 11px; margin: 0; transform: none; }
.speaking { position: absolute; left: 1871px; top: 185px; width: 491px; height: 82px; background: #30404b; border: 1px solid #0c0c0c; border-radius: 3px; padding-left: 44px; font-size: 24.5px; font-weight: 500; line-height: 86px; box-shadow: 0 8px 30px rgba(0,0,0,.35); }
.cursor { position: absolute; left: 1798px; top: 252px; }
```
